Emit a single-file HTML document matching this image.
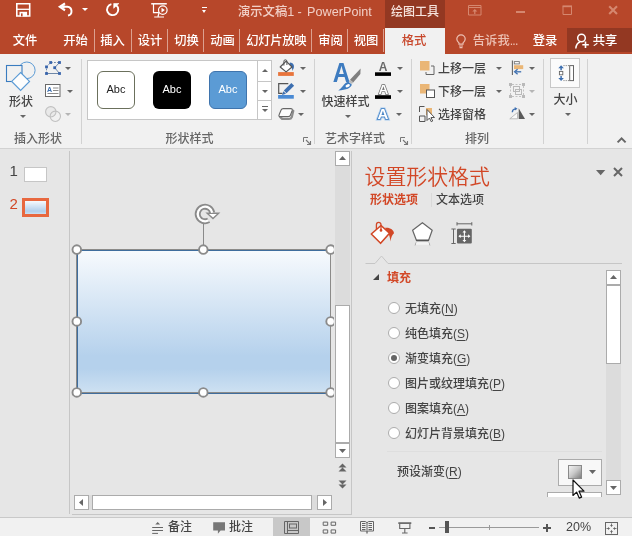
<!DOCTYPE html>
<html lang="zh-CN">
<head>
<meta charset="utf-8">
<title>演示文稿1 - PowerPoint</title>
<style>
html,body{margin:0;padding:0;}
body{width:632px;height:536px;overflow:hidden;background:#e6e6e6;font-family:"Liberation Sans","Noto Sans CJK SC",sans-serif;font-size:12px;color:#444;font-weight:500;}
#app{position:relative;width:632px;height:536px;overflow:hidden;will-change:transform;}
.abs{position:absolute;}
.t{position:absolute;white-space:nowrap;line-height:16px;height:16px;}
svg{position:absolute;overflow:visible;}
/* title */
#titlebar{left:0;top:0;width:632px;height:54px;background:#b7472a;}
.tab{color:#fff;font-size:12.300px;top:33px;margin-left:-0.200px;}
.tsep{position:absolute;top:29px;width:1px;height:23px;background:#dca08f;}
/* ribbon */
#ribbon{left:0;top:54px;width:632px;height:94px;background:#f1f1f1;border-bottom:1px solid #d2d2d2;}
.gsep{position:absolute;top:59px;width:1px;height:85px;background:#d2d2d2;}
.glabel{color:#666;top:131px;}
.rt{color:#444;}
.arr{position:absolute;width:0;height:0;border-left:3px solid transparent;border-right:3px solid transparent;border-top:3px solid #666;}
.arr.dis{border-top-color:#b5b5b5;}

.sb{position:absolute;background:#fff;border:1px solid #ababab;box-sizing:border-box;}
.hd{position:absolute;width:6.700px;height:6.700px;border:1.900px solid #8b8b8b;border-radius:50%;background:#fff;box-sizing:content-box;}
.radio{position:absolute;width:10px;height:10px;border:1px solid #ababab;border-radius:50%;background:#fff;box-sizing:content-box;}
.opt{color:#444;font-size:12px;}
u{text-decoration:underline;text-underline-offset:1.5px;}
</style>
</head>
<body>
<div id="app">
<!-- TITLEBAR -->
<div id="titlebar" class="abs"></div>
<div class="abs" style="left:385px;top:0;width:60px;height:28px;background:#933822;"></div>
<div class="abs" style="left:385px;top:28px;width:60px;height:26px;background:#f1f1f1;"></div>
<div class="abs" style="left:567px;top:28px;width:65px;height:24px;background:#933822;"></div>
<!-- quick access icons -->
<svg style="left:16px;top:3px" width="15" height="14" viewBox="0 0 15 14"><path d="M0.8 0.8h12.9v12.2h-12.9z" fill="none" stroke="#fff" stroke-width="1.6"/><path d="M0.8 6.3h12.9" stroke="#fff" stroke-width="1.3"/><rect x="3.5" y="8.8" width="7.6" height="4.6" fill="#fff"/><rect x="5" y="10.4" width="1.6" height="3" fill="#b7472a"/></svg>
<svg style="left:58px;top:3px" width="17" height="14" viewBox="0 0 17 14"><path d="M7 0.400L1.800 3.800 7 7.400" fill="none" stroke="#fff" stroke-width="2.100"/><path d="M3.500 3.800h5.900a4.400 4.400 0 0 1 0.600 8.700" fill="none" stroke="#fff" stroke-width="1.900"/><path d="M6.500 1.800L3.500 3.800l3 2z" fill="#fff"/></svg>
<div class="arr" style="left:81.500px;top:8px;border-top-color:#fff;border-left-width:3px;border-right-width:3px;border-top-width:3.200px;"></div>
<svg style="left:105px;top:2px" width="15" height="15" viewBox="0 0 15 15"><path d="M6.400 2.100A5.600 5.600 0 1 0 11.200 3.200" fill="none" stroke="#fff" stroke-width="1.900"/><path d="M8.700 6.300V1.500h5.200z" fill="#fff" stroke="#fff" stroke-width="0.600" stroke-linejoin="round"/></svg>
<svg style="left:151px;top:2px" width="17" height="17" viewBox="0 0 17 17"><path d="M0.200 1.800h15.600" stroke="#fff" stroke-width="1.500" fill="none"/><path d="M2.500 2v8.700H8M8 11l-1 3.500M3.200 15h9.800" fill="none" stroke="#fff" stroke-width="1.200"/><circle cx="11.800" cy="8.100" r="4.300" fill="#b7472a" stroke="#fff" stroke-width="1.200"/><path d="M10.500 5.800l3.400 2.300-3.400 2.300z" fill="#fff"/></svg>
<div class="abs" style="left:202px;top:6.800px;width:5px;height:1.200px;background:#fff;"></div>
<div class="arr" style="left:202px;top:10px;border-top-color:#fff;border-left-width:2.500px;border-right-width:2.500px;"></div>
<div class="t" style="left:238px;top:4px;color:#f1cfc6;font-size:12.300px;">演示文稿<span style="font-size:12.600px;">1</span></div><div class="t" style="left:297.500px;top:4px;color:#f1cfc6;font-size:12.600px;">-</div><div class="t" style="left:307px;top:4px;color:#f1cfc6;font-size:12.600px;letter-spacing:0.050px;">PowerPoint</div>
<div class="t" style="left:391px;top:4px;color:#f6e4de;">绘图工具</div>
<!-- window controls -->
<svg style="left:468px;top:5px" width="14" height="11" viewBox="0 0 14 11"><path d="M0.500 0.500h12.500v9.500H0.500zM0.500 2.500h12.500" fill="none" stroke="#d5876f" stroke-width="1"/><path d="M6.800 9V5" fill="none" stroke="#d5876f" stroke-width="1.200"/><path d="M4.300 6.600l2.500-2.600 2.500 2.600z" fill="#d5876f"/></svg>
<div class="abs" style="left:516px;top:11px;width:9px;height:2px;background:#d5876f;"></div>
<svg style="left:562px;top:5px" width="11" height="11" viewBox="0 0 11 11"><path d="M1 1.500h8.500v8H1z" fill="none" stroke="#d5876f" stroke-width="1"/><path d="M0.500 1.300h9.500" stroke="#d5876f" stroke-width="1.800"/></svg>
<svg style="left:608px;top:5px" width="10" height="10" viewBox="0 0 10 10"><path d="M1.200 1.300l7.800 7.800M9 1.300L1.200 9.100" fill="none" stroke="#d5876f" stroke-width="2.100"/></svg>
<!-- tabs -->
<div class="t tab" style="left:13px;">文件</div>
<div class="t tab" style="left:63.5px;">开始</div>
<div class="tsep" style="left:94px"></div>
<div class="t tab" style="left:100.5px;">插入</div>
<div class="tsep" style="left:131px"></div>
<div class="t tab" style="left:138px;">设计</div>
<div class="tsep" style="left:167px"></div>
<div class="t tab" style="left:174.5px;">切换</div>
<div class="tsep" style="left:203px"></div>
<div class="t tab" style="left:210.5px;">动画</div>
<div class="tsep" style="left:239px"></div>
<div class="t tab" style="left:246.500px;letter-spacing:-0.300px;">幻灯片放映</div>
<div class="tsep" style="left:311px"></div>
<div class="t tab" style="left:318.5px;">审阅</div>
<div class="tsep" style="left:347px"></div>
<div class="t tab" style="left:354px;">视图</div>
<div class="tsep" style="left:383px"></div>
<div class="t tab" style="left:402px;color:#c8472b;">格式</div>
<svg style="left:456px;top:34px" width="10" height="14" viewBox="0 0 10 14"><path d="M3 10.2V9C1.6 8 0.8 6.700.8 5.100A4.200 4.200 0 0 1 9.200 5.100C9.200 6.700 8.400 8 7 9v1.200z" fill="none" stroke="#ecc0b3" stroke-width="1.2"/><path d="M3 12h4M3.500 13.600h3" stroke="#ecc0b3" stroke-width="1.100" fill="none"/></svg>
<div class="t tab" style="left:473px;color:#ecc0b3;">告诉我<span style="letter-spacing:-0.800px;">...</span></div>
<div class="t tab" style="left:533px;">登录</div>
<svg style="left:575px;top:33px" width="15" height="16" viewBox="0 0 15 16"><circle cx="6.500" cy="5" r="3.800" fill="none" stroke="#fff" stroke-width="1.500"/><path d="M0.800 15.500c0.300-3.500 2-5.800 4.200-6.500" fill="none" stroke="#fff" stroke-width="1.500"/><path d="M10.500 8.500v6.500M7.300 11.800h6.500" stroke="#fff" stroke-width="1.600" fill="none"/></svg>
<div class="t tab" style="left:593px;">共享</div>
<!-- RIBBON -->
<div id="ribbon" class="abs"></div>
<!-- group 1: insert shapes -->
<svg style="left:5px;top:60px" width="31" height="31" viewBox="0 0 31 31"><circle cx="21.800" cy="10.300" r="8.300" fill="#f1f1f1" stroke="#5b9bd5" stroke-width="1"/><rect x="1.500" y="5.500" width="15.500" height="16" fill="#f1f1f1" stroke="#3a7cc0" stroke-width="1.100"/><path d="M15.600 12.500l8.900 8.900-8.900 8.900-8.900-8.900z" fill="#fdfdfd" stroke="#5b9bd5" stroke-width="1.200"/></svg>
<div class="t rt" style="left:9px;top:94px;">形状</div>
<div class="arr" style="left:20px;top:115px;"></div>
<svg style="left:45px;top:60px" width="17" height="16" viewBox="0 0 17 16"><path d="M14.500 2.500L9.700 7.700l4.800 5.800H1.500" fill="none" stroke="#6e87a8" stroke-width="1"/><path d="M1.500 13.500V6.900L5.700 2.500h8.800" fill="none" stroke="#6e87a8" stroke-width="1" stroke-dasharray="1.800 1.400"/><g fill="#3864ab"><rect x="4.300" y="1.100" width="2.800" height="2.800"/><rect x="13.100" y="1.100" width="2.800" height="2.800"/><rect x="8.300" y="6.300" width="2.800" height="2.800"/><rect x="0.100" y="5.500" width="2.800" height="2.800"/><rect x="0.100" y="12.100" width="2.800" height="2.800"/><rect x="13.100" y="12.100" width="2.800" height="2.800"/></g></svg>
<div class="arr" style="left:65px;top:67px;"></div>
<svg style="left:45px;top:84px" width="16" height="13" viewBox="0 0 16 13"><rect x="0.500" y="0.500" width="14.500" height="12" fill="#fff" stroke="#6a6a6a" stroke-width="1"/><text x="2" y="7.500" font-size="7" font-weight="bold" fill="#3d6fb0" font-family="Liberation Sans, sans-serif">A</text><path d="M8 4h5.500M8 6.500h5.500M2.500 9.500h11" stroke="#8a8a8a" stroke-width="1" fill="none"/></svg>
<div class="arr" style="left:67px;top:90px;"></div>
<svg style="left:45px;top:106px" width="17" height="16" viewBox="0 0 17 16"><circle cx="5.800" cy="5.800" r="5.200" fill="#e9e9e9" stroke="#c0c0c0" stroke-width="1.100"/><circle cx="10.300" cy="10.300" r="5.200" fill="none" stroke="#c0c0c0" stroke-width="1.100"/></svg>
<div class="arr dis" style="left:65px;top:113px;"></div>
<div class="t glabel" style="left:14px;">插入形状</div>
<div class="gsep" style="left:81px"></div>
<!-- group 2: shape styles -->
<div class="abs" style="left:87px;top:60px;width:183px;height:58px;background:#fff;border:1px solid #c6c6c6;"></div>
<div class="abs" style="left:257px;top:60px;width:1px;height:59px;background:#c6c6c6;"></div>
<div class="abs" style="left:257px;top:81px;width:14px;height:1px;background:#c6c6c6;"></div>
<div class="abs" style="left:257px;top:100px;width:14px;height:1px;background:#c6c6c6;"></div>
<div class="abs" style="left:262px;top:69px;width:0;height:0;border-left:3px solid transparent;border-right:3px solid transparent;border-bottom:3px solid #666;"></div>
<div class="arr" style="left:262px;top:90px;"></div>
<div class="abs" style="left:262px;top:106px;width:6px;height:1px;background:#666;"></div>
<div class="arr" style="left:262px;top:109px;"></div>
<div class="abs" style="left:97px;top:71px;width:36px;height:36px;border:1px solid #6b705c;border-radius:6px;background:#fff;"></div>
<div class="t" style="left:97px;top:80.800px;width:38px;text-align:center;color:#222;font-size:11px;">Abc</div>
<div class="abs" style="left:153px;top:71px;width:38px;height:38px;border-radius:6px;background:#000;"></div>
<div class="t" style="left:153px;top:80.800px;width:38px;text-align:center;color:#fff;font-size:11px;">Abc</div>
<div class="abs" style="left:209px;top:71px;width:36px;height:36px;border:1px solid #3f74ad;border-radius:6px;background:#5b9bd5;"></div>
<div class="t" style="left:209px;top:80.800px;width:38px;text-align:center;color:#fff;font-size:11px;">Abc</div>
<!-- fill / outline / effects -->
<svg style="left:278px;top:59px" width="18" height="17" viewBox="0 0 18 17"><rect x="0.100" y="13.100" width="15.700" height="3.800" fill="#e8743b"/><path d="M12 3.600c3 0.200 4.600 2.400 3.800 5.400l-1.500 3c0.200-2.500-0.800-4.500-3.300-6z" fill="#3d6fb0"/><path d="M8.100 2.100L14 8l-5.900 4.900L2.200 8z" fill="#fff" stroke="#555" stroke-width="1.200" stroke-linejoin="round"/><path d="M5.900 6.600V2.300a1.500 1.500 0 0 1 3 0V6" fill="none" stroke="#555" stroke-width="1"/></svg>
<div class="arr" style="left:300px;top:67px;"></div>
<svg style="left:278px;top:82px" width="18" height="17" viewBox="0 0 18 17"><rect x="0.100" y="13" width="15.700" height="3.700" fill="#4a8ad4"/><path d="M10.300 1.600H0.700v9.700h3.800" fill="none" stroke="#555" stroke-width="1.200"/><path d="M13.400 1l2.700 2.700-7.600 7.600-2.700-2.700z" fill="#3d6fb0"/><path d="M5.400 9.200l2.600 2.600-4 1.200z" fill="#3d6fb0"/></svg>
<div class="arr" style="left:300px;top:90px;"></div>
<svg style="left:278px;top:107px" width="17" height="13" viewBox="0 0 17 13"><path d="M2 9.800c1 1.500 2 2.200 3.500 2.200h5.500c1.500 0 2.300-0.500 2.800-1.800l1.500-6.500" fill="none" stroke="#8c8c8c" stroke-width="2.200" stroke-linecap="round"/><path d="M5.200 1.600h7.600c1.300 0 1.800 0.600 1.400 1.800l-1.800 4.800c-0.400 1-1 1.400-2.200 1.400H2.300c-1.300 0-1.700-0.700-1.200-1.800l2-4.800c0.400-1 1-1.400 2.100-1.400z" fill="#fdfdfd" stroke="#666" stroke-width="1.100"/></svg>
<div class="arr" style="left:298px;top:113px;"></div>
<div class="t glabel" style="left:165.500px;">形状样式</div>
<svg style="left:303px;top:137px" width="8" height="8" viewBox="0 0 8 8"><path d="M0.500 5V0.500H5" fill="none" stroke="#777" stroke-width="1"/><path d="M3 3l4 4M7.500 4v3.500H4" fill="none" stroke="#777" stroke-width="1.100"/></svg>
<div class="gsep" style="left:314px"></div>
<!-- group 3: wordart -->
<svg style="left:332px;top:60px" width="30" height="32" viewBox="0 0 30 32"><text x="0" y="22" font-size="28" font-weight="bold" fill="#3e7cc0" font-family="Liberation Sans, sans-serif" transform="translate(0.700,0) scale(0.860,1)">A</text><path d="M28.600 8.600l-0.200 5.500-7.200 8.300-3.200-2.600z" fill="#7f7f7f"/><path d="M18 19.800l3.200 2.600-1.300 1.600-3.300-2.500z" fill="#b9b9b9"/><path d="M16.400 21.800l3.400 2.600c-0.500 3.400-5.500 5.600-13.500 6 3.500-1.500 5.500-7.500 10.100-8.600z" fill="#3e7cc0"/><ellipse cx="15.700" cy="25.700" rx="2.300" ry="1.400" fill="#fff" transform="rotate(-25 15.700 25.700)"/></svg>
<div class="t rt" style="left:321.500px;top:94px;">快速样式</div>
<div class="arr" style="left:345px;top:115px;"></div>
<svg style="left:375px;top:60px" width="17" height="16" viewBox="0 0 17 16"><rect x="0" y="12.300" width="16" height="3.600" fill="#000"/><text x="8.200" y="11.200" text-anchor="middle" font-size="12" font-weight="bold" fill="#6a6a6a" font-family="Liberation Sans, sans-serif">A</text></svg>
<div class="arr" style="left:397px;top:67px;"></div>
<svg style="left:375px;top:82px" width="17" height="17" viewBox="0 0 17 17"><rect x="0" y="13.200" width="16" height="3.700" fill="#000"/><text x="8.400" y="11.600" text-anchor="middle" font-size="13.500" font-weight="bold" fill="#fff" stroke="#707070" stroke-width="1.500" paint-order="stroke" font-family="Liberation Sans, sans-serif">A</text></svg>
<div class="arr" style="left:397px;top:90px;"></div>
<svg style="left:376px;top:106px" width="14" height="15" viewBox="0 0 14 15"><text x="7" y="12.800" text-anchor="middle" font-size="15" font-weight="bold" fill="#fff" stroke="#a9cbee" stroke-width="3.200" paint-order="stroke" font-family="Liberation Sans, sans-serif">A</text><text x="7" y="12.800" text-anchor="middle" font-size="15" font-weight="bold" fill="#fff" stroke="#3e7cc0" stroke-width="1.500" paint-order="stroke" font-family="Liberation Sans, sans-serif">A</text></svg>
<div class="arr" style="left:396px;top:113px;"></div>
<div class="t glabel" style="left:325px;">艺术字样式</div>
<svg style="left:400px;top:137px" width="8" height="8" viewBox="0 0 8 8"><path d="M0.500 5V0.500H5" fill="none" stroke="#777" stroke-width="1"/><path d="M3 3l4 4M7.500 4v3.500H4" fill="none" stroke="#777" stroke-width="1.100"/></svg>
<div class="gsep" style="left:411px"></div>
<!-- group 4: arrange -->
<svg style="left:420px;top:61px" width="15" height="14" viewBox="0 0 15 14"><rect x="0" y="0" width="9.500" height="9.500" fill="#eab676"/><path d="M11 5h3v8.500H6V11" fill="none" stroke="#666" stroke-width="1"/></svg>
<div class="t rt" style="left:438px;top:61px;">上移一层</div>
<div class="arr" style="left:496px;top:67px;"></div>
<svg style="left:420px;top:84px" width="15" height="14" viewBox="0 0 15 14"><rect x="0" y="0" width="9.500" height="9.500" fill="#eab676"/><rect x="6.500" y="6" width="8" height="7.500" fill="#fff" stroke="#555" stroke-width="1"/></svg>
<div class="t rt" style="left:438px;top:84px;">下移一层</div>
<div class="arr" style="left:496px;top:90px;"></div>
<svg style="left:419px;top:106px" width="16" height="16" viewBox="0 0 16 16"><path d="M0.500 6V0.500h5M0.500 10h5.500v5.500H0.500z" fill="none" stroke="#555" stroke-width="1"/><rect x="7" y="2" width="6" height="7" fill="#eab676"/><path d="M8 3.500v11l2.500-2.500 1.700 3.700 1.500-0.700-1.700-3.500h3.500z" fill="#fff" stroke="#444" stroke-width="0.900"/></svg>
<div class="t rt" style="left:438px;top:107px;">选择窗格</div>
<svg style="left:511px;top:60px" width="13" height="16" viewBox="0 0 13 16"><path d="M1.400 0.600v14.500" stroke="#666" stroke-width="1.100"/><rect x="3.300" y="1.600" width="5" height="2.300" fill="#fff" stroke="#777" stroke-width="0.900"/><rect x="3" y="5.200" width="9.200" height="3.900" fill="#eab676"/><path d="M10.200 11.800H4.500" fill="none" stroke="#3d6fb0" stroke-width="1.300"/><path d="M6.600 9.300l-3 2.500 3 2.500" fill="none" stroke="#3d6fb0" stroke-width="1.300"/></svg>
<div class="arr" style="left:529px;top:67px;"></div>
<svg style="left:509px;top:83px" width="17" height="16" viewBox="0 0 17 16"><path d="M3 1.500h10M3 13.500h10M1.500 3v9M14.500 3v9" stroke="#c2c2c2" stroke-width="1" stroke-dasharray="2 1.500" fill="none"/><rect x="4.500" y="3.500" width="6" height="5" fill="none" stroke="#b9b9b9" stroke-width="1"/><rect x="6.500" y="6.500" width="6" height="5" fill="none" stroke="#b9b9b9" stroke-width="1"/><g fill="#b9b9b9"><rect x="0" y="0" width="3" height="3"/><rect x="13" y="0" width="3" height="3"/><rect x="0" y="12" width="3" height="3"/><rect x="13" y="12" width="3" height="3"/></g></svg>
<div class="arr dis" style="left:529px;top:90px;"></div>
<svg style="left:509px;top:107px" width="16" height="13" viewBox="0 0 16 13"><path d="M8.500 5.500v6.300H0.800z" fill="#fafafa" stroke="#b5b5b5" stroke-width="0.900"/><path d="M9.700 1.300v10.700h6.300z" fill="#5a5a5a"/><path d="M3.300 5.200c0-2 1.200-3.200 3.200-3.400" fill="none" stroke="#3d6fb0" stroke-width="1.300"/><path d="M5.700 0l2.800 1.700-2.600 1.900z" fill="#3d6fb0"/></svg>
<div class="arr" style="left:529px;top:113px;"></div>
<div class="t glabel" style="left:465px;">排列</div>
<div class="gsep" style="left:543px"></div>
<!-- group 5: size -->
<div class="abs" style="left:550px;top:58px;width:28px;height:28px;background:#fbfbfb;border:1px solid #c8c8c8;"></div>
<svg style="left:557px;top:64px" width="18" height="18" viewBox="0 0 18 18"><rect x="12.700" y="1.600" width="3.800" height="15" fill="#fff" stroke="#666" stroke-width="1"/><path d="M6.500 1.600h6M6.500 16.600h6" stroke="#777" stroke-width="1" stroke-dasharray="1 1.200"/><rect x="2.400" y="7.400" width="3.400" height="3.400" fill="#fff" stroke="#666" stroke-width="0.900"/><path d="M4.100 6.300V3M4.100 11.900v3.300" fill="none" stroke="#3d6fb0" stroke-width="1.500"/><path d="M1.300 4.200L4.100 1.200l2.800 3zM1.300 14L4.100 17l2.800-3z" fill="#3d6fb0"/></svg>
<div class="t rt" style="left:553.500px;top:92px;">大小</div>
<div class="arr" style="left:565px;top:113px;"></div>
<div class="gsep" style="left:587px"></div>
<svg style="left:617px;top:137px" width="10" height="6" viewBox="0 0 10 6"><path d="M0.600 5.400L4.600 1.400l4 4" fill="none" stroke="#666" stroke-width="2"/></svg>
<!-- WORKSPACE -->
<div class="t" style="left:9.500px;top:163px;font-size:15px;color:#444;">1</div>
<div class="abs" style="left:24px;top:167px;width:21px;height:13px;background:#fff;border:1px solid #c6c6c6;"></div>
<div class="t" style="left:9.500px;top:196px;font-size:15px;color:#d24726;">2</div>
<div class="abs" style="left:22px;top:198px;width:21px;height:13px;border:3px solid #e8683f;background:linear-gradient(#f7fafd 0%,#b5d1ec 74%,#b5d1ec 83%,#cee1f2 100%);"></div>
<div class="abs" style="left:69px;top:151px;width:1px;height:363px;background:#c6c6c6;"></div>
<!-- slide viewport -->
<div class="abs" style="left:70px;top:148px;width:264px;height:366px;overflow:hidden;">
  <div class="abs" style="left:7px;top:102px;width:254px;height:144px;border:1px solid #3f6d9d;box-sizing:border-box;background:linear-gradient(#f7fafd 0%,#b5d1ec 74%,#b5d1ec 83%,#cee1f2 100%);"></div>
  <div class="abs" style="left:6px;top:101px;width:255px;height:144px;border:1px solid #8c8b89;box-sizing:border-box;"></div>
  <div class="abs" style="left:133px;top:75px;width:1px;height:23px;background:#8a8a8a;"></div>
  <svg style="left:123.500px;top:55px" width="28" height="22" viewBox="0 0 28 22"><path d="M18.190 9.730A7.300 7.300 0 1 0 14.650 17.320" fill="none" stroke="#8a8a8a" stroke-width="5.900"/><path d="M11.400 9.400h15l-7.400 7.200z" fill="#8a8a8a"/><path d="M18.190 9.730A7.300 7.300 0 1 0 14.650 17.320" fill="none" stroke="#fff" stroke-width="2.300"/><path d="M15 10.900h7.800l-3.800 3.700z" fill="#fff"/></svg>
  <svg style="left:0;top:0" width="264" height="366" viewBox="0 0 264 366"><g fill="#fff" stroke="#8b8b8b" stroke-width="1.900"><circle cx="6.8" cy="101.6" r="4.3"/><circle cx="133.3" cy="101.6" r="4.3"/><circle cx="260.6" cy="101.6" r="4.3"/><circle cx="6.8" cy="173.4" r="4.3"/><circle cx="260.6" cy="173.4" r="4.3"/><circle cx="6.8" cy="244.4" r="4.3"/><circle cx="133.3" cy="244.4" r="4.3"/><circle cx="260.6" cy="244.4" r="4.3"/></g></svg>
</div>
<!-- v scrollbar -->
<div class="abs" style="left:335px;top:151px;width:15px;height:307px;background:#dcdcdc;"></div>
<div class="sb" style="left:335px;top:151px;width:15px;height:15px;"></div>
<svg style="left:339px;top:156px" width="7" height="4" viewBox="0 0 7 4"><polygon points="0,4 3.5,0 7,4" fill="#666"/></svg>
<div class="sb" style="left:335px;top:305px;width:15px;height:138px;"></div>
<div class="sb" style="left:335px;top:443px;width:15px;height:15px;"></div>
<svg style="left:339px;top:448.5px" width="7" height="4" viewBox="0 0 7 4"><polygon points="0,0 7,0 3.5,4" fill="#666"/></svg>
<svg style="left:338px;top:463px" width="9" height="9" viewBox="0 0 9 9"><path d="M0.500 4.500L4.500 0.500l4 4zM0.500 8.500l4-4 4 4z" fill="#666"/></svg>
<svg style="left:338px;top:480px" width="9" height="9" viewBox="0 0 9 9"><path d="M0.500 0.500l4 4 4-4zM0.500 4.500l4 4 4-4z" fill="#666"/></svg>
<div class="abs" style="left:351px;top:151px;width:1px;height:363px;background:#c6c6c6;"></div>
<!-- h scrollbar -->
<div class="abs" style="left:74px;top:495px;width:258px;height:15px;background:#dcdcdc;"></div>
<div class="sb" style="left:74px;top:495px;width:15px;height:15px;"></div>
<svg style="left:79px;top:499px" width="4" height="7" viewBox="0 0 4 7"><polygon points="4,0 0,3.5 4,7" fill="#666"/></svg>
<div class="sb" style="left:92px;top:495px;width:220px;height:15px;"></div>
<div class="sb" style="left:317px;top:495px;width:15px;height:15px;"></div>
<svg style="left:323px;top:499px" width="4" height="7" viewBox="0 0 4 7"><polygon points="0,0 4,3.5 0,7" fill="#666"/></svg>
<div class="abs" style="left:72px;top:514px;width:280px;height:1px;background:#c6c6c6;"></div>
<!-- PANEL -->
<div class="t" style="left:364.500px;top:164px;font-size:20.900px;line-height:26px;height:26px;color:#d24726;font-weight:350;">设置形状格式</div>
<svg style="left:595.7px;top:170px" width="9.3" height="5.3" viewBox="0 0 9.3 5.3"><polygon points="0,0 9.3,0 4.65,5.3" fill="#666"/></svg>
<svg style="left:613px;top:167px" width="10" height="10" viewBox="0 0 10 10"><path d="M1 1l8 8M9 1L1 9" fill="none" stroke="#666" stroke-width="2"/></svg>
<div class="t" style="left:370px;top:192px;color:#d24726;font-weight:bold;">形状选项</div>
<div class="abs" style="left:431px;top:193px;width:1px;height:14px;background:#d9d9d9;"></div>
<div class="t" style="left:436px;top:192px;color:#444;">文本选项</div>
<!-- icons -->
<svg style="left:370px;top:221px" width="25" height="24" viewBox="0 0 25 24"><path d="M15 6.800c4.500-0.800 8.800 1.800 9 5.400-1.600 1.200-3 4.200-3.600 8.200-0.300-3.200-0.900-5.800-2-7.600z" fill="#d24726"/><path d="M1.300 13L11 4.500l8.500 7.700-8.900 10.100z" fill="#fff" stroke="#d24726" stroke-width="1.600" stroke-linejoin="round"/><path d="M11 9V3.700a2.300 2.300 0 0 0-4.600 0V8.500" fill="none" stroke="#d24726" stroke-width="1.300"/><circle cx="11" cy="9.400" r="1.300" fill="#d24726"/></svg>
<svg style="left:412px;top:222px" width="22" height="24" viewBox="0 0 22 24"><path d="M10.400 0.700l9.800 7.500-3.700 10.300h-12L0.600 8.200z" fill="#fff" stroke="#666" stroke-width="1.200" stroke-linejoin="round"/><path d="M4.300 18.400h12.400" stroke="#555" stroke-width="1.800"/><path d="M4.300 20.200l-1.200 3.200M16.700 20.200l1.200 3.200" stroke="#a0a0a0" stroke-width="1"/><path d="M4.500 20.300h12l0.800 2.500H3.700z" fill="#f4f4f4"/></svg>
<svg style="left:451px;top:222px" width="22" height="23" viewBox="0 0 22 23"><path d="M6 1.800h14.800M6 0.200v3.300M20.800 0.200v3.300M2.500 7v14.500M0.400 7h4.300M0.400 21.500h4.300" fill="none" stroke="#666" stroke-width="1"/><rect x="6" y="6.800" width="14.800" height="14.800" rx="1" fill="#666"/><path d="M13.400 9.500v9.400M8.700 14.200h9.400" stroke="#fff" stroke-width="1.100"/><path d="M13.400 8.200l1.900 2.300h-3.800zM13.400 20.200l1.900-2.300h-3.800zM7.400 14.200l2.300-1.900v3.800zM19.400 14.200l-2.300-1.900v3.800z" fill="#fff"/></svg>
<svg style="left:365px;top:254px" width="258" height="11" viewBox="0 0 258 11"><path d="M0.500 9.500h9.500l6.500-7.500 6.500 7.500H257" fill="none" stroke="#c6c6c6" stroke-width="1"/></svg>
<!-- fill section -->
<div class="abs" style="left:373px;top:274px;width:0;height:0;border-left:6px solid transparent;border-bottom:6px solid #444;"></div>
<div class="t" style="left:387px;top:270px;color:#d24726;font-weight:bold;">填充</div>
<div class="radio" style="left:388px;top:302px;"></div>
<div class="t opt" style="left:405px;top:301px;">无填充(<u>N</u>)</div>
<div class="radio" style="left:388px;top:327px;"></div>
<div class="t opt" style="left:405px;top:326px;">纯色填充(<u>S</u>)</div>
<div class="radio" style="left:388px;top:352px;"></div>
<div class="abs" style="left:391px;top:355px;width:6px;height:6px;border-radius:50%;background:#666;"></div>
<div class="t opt" style="left:405px;top:351px;">渐变填充(<u>G</u>)</div>
<div class="radio" style="left:388px;top:377px;"></div>
<div class="t opt" style="left:405px;top:376px;">图片或纹理填充(<u>P</u>)</div>
<div class="radio" style="left:388px;top:402px;"></div>
<div class="t opt" style="left:405px;top:401px;">图案填充(<u>A</u>)</div>
<div class="radio" style="left:388px;top:427px;"></div>
<div class="t opt" style="left:405px;top:426px;">幻灯片背景填充(<u>B</u>)</div>
<div class="abs" style="left:387px;top:451px;width:215px;height:1px;background:#dedede;"></div>
<div class="t opt" style="left:397px;top:464px;">预设渐变(<u>R</u>)</div>
<div class="abs" style="left:558px;top:459px;width:42px;height:25px;background:#f8f8f8;border:1px solid #ababab;"></div>
<div class="abs" style="left:568px;top:465px;width:12px;height:12px;border:1px solid #8a8a8a;background:linear-gradient(135deg,#f2f2f2 0%,#c8c8c8 50%,#7f7f7f 100%);"></div>
<svg style="left:589px;top:470px" width="7" height="4" viewBox="0 0 7 4"><polygon points="0,0 7,0 3.5,4" fill="#666"/></svg>
<div class="abs" style="left:547px;top:492px;width:53px;height:4px;background:#fff;border:1px solid #ababab;border-bottom:none;"></div>
<!-- panel scrollbar -->
<div class="abs" style="left:606px;top:270px;width:15px;height:225px;background:#dcdcdc;"></div>
<div class="sb" style="left:606px;top:270px;width:15px;height:15px;"></div>
<svg style="left:610px;top:275px" width="7" height="4" viewBox="0 0 7 4"><polygon points="0,4 3.5,0 7,4" fill="#666"/></svg>
<div class="sb" style="left:606px;top:285px;width:15px;height:79px;"></div>
<div class="sb" style="left:606px;top:480px;width:15px;height:15px;"></div>
<svg style="left:610px;top:485.5px" width="7" height="4" viewBox="0 0 7 4"><polygon points="0,0 7,0 3.5,4" fill="#666"/></svg>
<!-- cursor -->
<svg style="left:572px;top:479px" width="13" height="20" viewBox="0 0 13 20"><path d="M1 1v15.500l3.600-3.400 2.600 6 2.400-1-2.600-5.900h5z" fill="#fff" stroke="#111" stroke-width="1.200" stroke-linejoin="round"/></svg>
<!-- STATUS -->
<div class="abs" style="left:0;top:517px;width:632px;height:19px;background:#f1f1f1;border-top:1px solid #c9c9c9;box-sizing:border-box;"></div>
<svg style="left:152px;top:520px" width="12" height="14" viewBox="0 0 12 14"><path d="M3.300 4.400l2.400-2.500 2.400 2.500z" fill="#666"/><path d="M0.200 7.500H11M0.200 10.500H11M0.200 13.400H6" stroke="#666" stroke-width="1" fill="none"/></svg>
<div class="t" style="left:168px;top:519px;color:#444;">备注</div>
<svg style="left:213px;top:522px" width="13" height="12" viewBox="0 0 13 12"><path d="M0.200 0.200h11.800v8.400H7.600l-2.700 3.200V8.600H0.200z" fill="#777"/></svg>
<div class="t" style="left:229px;top:519px;color:#444;">批注</div>
<div class="abs" style="left:273px;top:518px;width:37px;height:18px;background:#c8c8c8;"></div>
<svg style="left:284px;top:521px" width="15" height="13" viewBox="0 0 15 13"><path d="M0.500 0.500h14v12h-14zM3.500 0.500v12" fill="none" stroke="#666" stroke-width="1"/><rect x="5.500" y="3" width="7" height="4" fill="none" stroke="#666" stroke-width="1"/><path d="M3.500 9.500h11" stroke="#666" stroke-width="1"/></svg>
<svg style="left:321px;top:521px" width="15" height="13" viewBox="0 0 15 13"><path d="M2.200 1.100h4.500v3.200H2.200zM10.100 1.100h4.500v3.200h-4.500zM2.200 8.900h4.500v3.200H2.200zM10.100 8.900h4.500v3.200h-4.500z" fill="none" stroke="#666" stroke-width="1"/></svg>
<svg style="left:360px;top:520px" width="14" height="14" viewBox="0 0 14 14"><path d="M0.500 1.500h4.800l1.700 1.200 1.700-1.200h4.800v9.500H8.700L7 12.200 5.300 11H0.500z" fill="none" stroke="#666" stroke-width="1"/><path d="M7 2.700v11" stroke="#666" stroke-width="1"/><path d="M2 3.500h3.500M2 5.500h3.500M2 7.500h3.500M2 9.500h3.500M8.500 3.500H12M8.500 5.500H12M8.500 7.500H12M8.500 9.500H12" stroke="#666" stroke-width="1" fill="none"/></svg>
<svg style="left:398px;top:520px" width="14" height="14" viewBox="0 0 14 14"><path d="M0.300 3.100h13" stroke="#666" stroke-width="1.700"/><path d="M1.700 3.500v5h10.200v-5M6.800 8.500v4.500M4 13h5.600" fill="none" stroke="#666" stroke-width="1.100"/></svg>
<div class="abs" style="left:429px;top:527px;width:6px;height:2px;background:#555;"></div>
<div class="abs" style="left:439px;top:527px;width:100px;height:1px;background:#9a9a9a;"></div>
<div class="abs" style="left:489px;top:525px;width:1px;height:5px;background:#9a9a9a;"></div>
<div class="abs" style="left:445px;top:521px;width:4px;height:12px;background:#555;"></div>
<div class="abs" style="left:543px;top:527px;width:8px;height:2px;background:#555;"></div>
<div class="abs" style="left:546px;top:524px;width:2px;height:8px;background:#555;"></div>
<div class="t" style="left:566px;top:519px;color:#444;font-size:12.500px;">20%</div>
<svg style="left:605px;top:522px" width="13" height="13" viewBox="0 0 13 13"><rect x="0.500" y="0.500" width="12" height="12" fill="none" stroke="#666" stroke-width="1"/><path d="M6.500 1.500v3M6.500 8.500v3M1.500 6.500h3M8.500 6.500h3" stroke="#666" stroke-width="0.900"/><path d="M6.500 4.800l1.500-1.800h-3zM6.500 8.200l1.500 1.800h-3zM4.800 6.500l-1.800-1.500v3zM8.200 6.500l1.800-1.500v3z" fill="#666"/></svg>
</div>
</body>
</html>
